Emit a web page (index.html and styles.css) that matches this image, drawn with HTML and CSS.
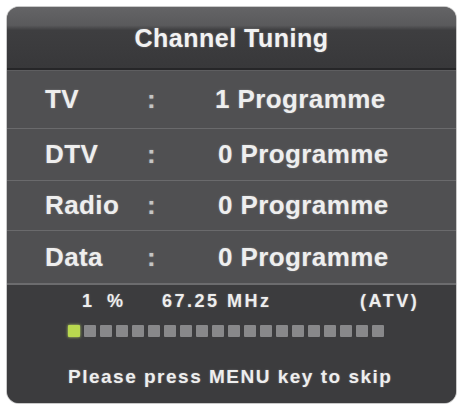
FILE: index.html
```html
<!DOCTYPE html>
<html>
<head>
<meta charset="utf-8">
<link rel="stylesheet" href="styles.css">
</head>
<body>
<div class="panel">
  <div class="header"><span class="title">Channel Tuning</span></div>
  <div class="rows">
    <div class="row r1"><span class="label">TV</span><span class="colon">:</span><span class="value">1 Programme</span></div>
    <div class="row r2"><span class="label">DTV</span><span class="colon">:</span><span class="value v0">0 Programme</span></div>
    <div class="row r3"><span class="label">Radio</span><span class="colon">:</span><span class="value v0">0 Programme</span></div>
    <div class="row r4"><span class="label">Data</span><span class="colon">:</span><span class="value v0">0 Programme</span></div>
  </div>
  <div class="footer">
    <div class="info">
      <span class="pct-num">1</span>
      <span class="pct">%</span>
      <span class="freq">67.25 MHz</span>
      <span class="mode">(ATV)</span>
    </div>
    <div class="progress">
      <span class="sq on"></span><span class="sq"></span><span class="sq"></span><span class="sq"></span><span class="sq"></span>
      <span class="sq"></span><span class="sq"></span><span class="sq"></span><span class="sq"></span><span class="sq"></span>
      <span class="sq"></span><span class="sq"></span><span class="sq"></span><span class="sq"></span><span class="sq"></span>
      <span class="sq"></span><span class="sq"></span><span class="sq"></span><span class="sq"></span><span class="sq"></span>
    </div>
    <div class="hint">Please press MENU key to skip</div>
  </div>
</div>
</body>
</html>
```

FILE: styles.css
```css
html, body {
  margin: 0;
  padding: 0;
  background: #ffffff;
}

body {
  font-family: "Liberation Sans", Arial, sans-serif;
  font-weight: bold;
  color: #eeeeee;
}

.panel {
  margin: 7px;
  width: 449px;
  height: 396px;
  border-radius: 12px;
  overflow: hidden;
  background: #505052;
  box-shadow: 0 0 0 1px #c9c9c9;
  display: flex;
  flex-direction: column;
}

.header {
  height: 61px;
  flex: none;
  background: linear-gradient(to bottom, #646466 0%, #5a5a5c 30%, #3e3e40 38%, #38383a 100%);
  border-bottom: 2px solid #262628;
  display: flex;
  align-items: center;
  justify-content: center;
}

.title {
  font-size: 25px;
  letter-spacing: 0.5px;
  color: #f2f2f2;
  text-shadow: 0 0 2px rgba(255,255,255,0.35);
  margin-top: 2px;
}

.rows {
  display: flex;
  flex-direction: column;
  flex: none;
}

.row {
  display: flex;
  align-items: center;
  border-top: 1px solid #6a6a6c;
  box-sizing: border-box;
  font-size: 26px;
  letter-spacing: 0.4px;
  text-shadow: 0 0 2px rgba(255,255,255,0.3);
}

.r1 { height: 58px; border-top-color: #5e5e60; }
.r2 { height: 52px; }
.r3 { height: 50px; }
.r4 { height: 53px; }

.label {
  width: 102px;
  padding-left: 38px;
  flex: none;
}

.colon {
  width: 68px;
  flex: none;
  color: #c4c4c4;
}

.value {
  flex: none;
}

.v0 { margin-left: 3px; }

.footer {
  flex: 1;
  background: #3c3c3e;
  border-top: 2px solid #6c6c6e;
  display: flex;
  flex-direction: column;
}

.info {
  height: 22px;
  margin-top: 5px;
  display: flex;
  align-items: center;
  font-size: 18px;
  letter-spacing: 2.5px;
  text-shadow: 0 0 2px rgba(255,255,255,0.3);
}

.pct-num { margin-left: 75px; width: 25px; }
.pct { width: 55px; }
.freq { width: 198px; }

.progress {
  margin-top: 13px;
  margin-left: 61px;
  display: flex;
  gap: 4px;
  height: 12px;
}

.sq {
  width: 12px;
  height: 12px;
  background: #88888a;
  border-radius: 1px;
}

.sq.on {
  background: #b9d94f;
  box-shadow: 0 0 3px #c8e86a;
}

.hint {
  margin-top: 29px;
  margin-left: 61px;
  height: 22px;
  display: flex;
  align-items: center;
  font-size: 19px;
  letter-spacing: 1.5px;
  text-shadow: 0 0 2px rgba(255,255,255,0.3);
}
```
